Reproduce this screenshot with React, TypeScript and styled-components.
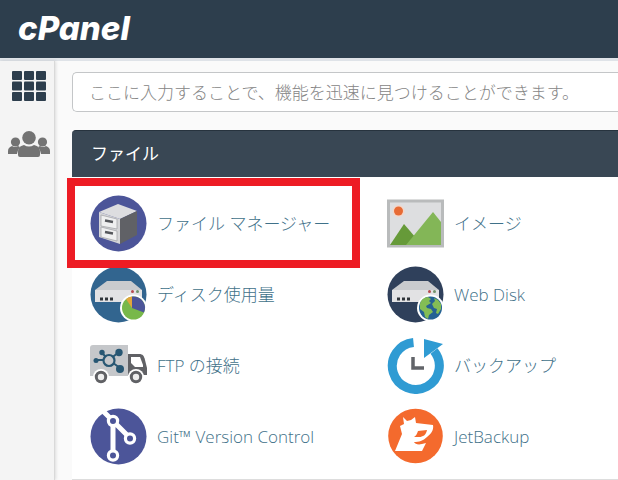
import React from 'react';
import styled, { createGlobalStyle } from 'styled-components';

const GlobalStyle = createGlobalStyle`
  * { box-sizing: border-box; }
  html, body { margin: 0; }
  body {
    background: #fafafa;
    font-family: 'Open Sans', 'Noto Sans CJK JP', sans-serif;
    font-size: 17px;
    font-weight: 300;
    overflow-x: hidden;
  }
`;

const Page = styled.div`
  min-height: 100vh;
  display: flex;
  flex-direction: column;
`;

const Header = styled.header`
  display: flex;
  align-items: center;
  height: 61px;
  padding: 0 18px 2px;
  background: #2d3e4d;
  border-bottom: 3px solid #dfe3e8;
`;

const Logo = styled.a`
  color: #fff;
  font-family: Inter, sans-serif;
  font-size: 33px;
  line-height: 40px;
  font-weight: 800;
  font-style: italic;
  text-decoration: none;
`;

const Layout = styled.div`
  display: flex;
  flex: 1;
`;

const Sidebar = styled.nav`
  display: flex;
  flex-direction: column;
  align-items: center;
  flex: 0 0 55px;
  gap: 30px;
  padding: 10px 0 0 4px;
  background: #f4f4f4;
  border-right: 1px solid #d9d9d9;
  box-shadow: 1px 0 3px rgba(0, 0, 0, 0.12);
`;

const NavButton = styled.button`
  display: block;
  padding: 0;
  border: 0;
  background: none;
  svg { display: block; }
`;

const Main = styled.main`
  flex: 1;
  min-width: 0;
  padding: 11px 0 0 17px;
`;

const Search = styled.input`
  display: block;
  width: 100%;
  height: 40px;
  margin-bottom: 18px;
  padding: 0 16px;
  border: 1px solid #c4c6c8;
  border-right: 0;
  border-radius: 5px 0 0 5px;
  background: #fff;
  font: inherit;
  color: #333;
  outline: none;
  &::placeholder { color: #858585; opacity: 1; }
`;

const Panel = styled.section`
  background: #fff;
  border-bottom: 1px solid #ddd;
`;

const PanelTitle = styled.h2`
  margin: 0;
  height: 47px;
  padding: 0 19px;
  border-top: 1px solid #27333e;
  border-radius: 4px 0 0 0;
  background: #394754;
  color: #fff;
  font-size: 17px;
  font-weight: 400;
  line-height: 45px;
`;

const Grid = styled.div`
  display: grid;
  grid-template-columns: 297px 1fr;
  row-gap: 14px;
  padding: 18px 0 14px 18px;
`;

const Feature = styled.a<{ $highlight?: boolean }>`
  position: relative;
  display: flex;
  align-items: center;
  gap: 10px;
  height: 57px;
  color: #3f7189;
  line-height: 24px;
  white-space: nowrap;
  text-decoration: none;
  svg { flex: none; display: block; }
  ${({ $highlight }) => $highlight && `
    z-index: 1;
    &::after {
      content: '';
      position: absolute;
      inset: -17px 27px -16px -23px;
      border: 8px solid #ed1c24;
    }
  `}
`;

const Icon = ({ children }: { children: React.ReactNode }) => (
  <svg width="57" height="57" viewBox="0 0 57 57" aria-hidden="true">{children}</svg>
);

const Server = ({ color }: { color: string }) => (
  <>
    <circle cx="28.5" cy="28.5" r="28" fill={color} />
    <path d="M5 24 17 15H41L52 24Z" fill="#c9cbce" />
    <path d="M5 24H52V36H5Z" fill="#e2e2e4" />
    <path d="M10 31.5h3v3h-3zM15 31.5h3v3h-3zM20 31.5h3v3h-3z" fill="#30343a" />
    <circle cx="42.5" cy="25.5" r="1.5" fill="#b74b50" />
    <circle cx="47.5" cy="25.5" r="1.5" fill="#72936b" />
    <circle cx="43.5" cy="42" r="13.5" fill="#fff" />
  </>
);

const FileManagerIcon = () => (
  <Icon>
    <circle cx="28.5" cy="28.5" r="28" fill="#4c5599" />
    <path d="M9 17 28 9 47 16 30 24Z" fill="#dddde0" />
    <path d="M9 17 30 24V49L9 42Z" fill="#d5d5d8" />
    <path d="M30 24 47 16V40L30 49Z" fill="#606166" />
    <path d="m11 20 16 4v10l-16-3ZM11 32l16 4v10l-16-4Z" fill="#efeff0" stroke="#a6a7ab" strokeWidth=".8" />
    <path d="m15 25.5 8 1.5m-8 10 8 1.5" stroke="#55575c" strokeWidth="2.3" />
  </Icon>
);

const DiskIcon = () => (
  <Icon>
    <Server color="#32658f" />
    <circle cx="43.5" cy="42" r="11.5" fill="#78b84a" />
    <path d="M42 42V30.6a11.5 11.5 0 0 1 12 16Z" fill="#4c5599" />
    <path d="M42 42 36 33a11.5 11.5 0 0 1 6-2.4Z" fill="#e1a63c" />
  </Icon>
);

const WebDiskIcon = () => (
  <Icon>
    <Server color="#2f405b" />
    <circle cx="43.5" cy="42" r="11.5" fill="#256294" />
    <path d="M33 38c1-4 4-7 8-7l3 2-2 2 2 2-5 3 1 2 4 1 2 3-4 3-1 4-3-2-1-5-4-3ZM47 32l4 2 3 4v5l-3 5-2-1 1-4-3-1-2-4 3-3Z" fill="#83bd55" />
  </Icon>
);

const FtpIcon = () => (
  <Icon>
    <path d="M3 8H38V39H0V11Q0 8 3 8Z" fill="#c5c7ca" />
    <path d="M38 17h11c4 0 5 2 6 6l2 8v7H38Z" fill="#606165" />
    <path d="M41 20h9l3 8v2H45l-4-4Z" fill="#fff" />
    <path d="m19 23-7-7m7 7H6m13 0 10-8m-10 8 11 8" stroke="#285773" strokeWidth="2" />
    <g fill="#285773">
      <circle cx="12" cy="15.5" r="2.7" /><circle cx="6" cy="23.5" r="2.5" />
      <circle cx="29" cy="15.5" r="3.7" /><circle cx="30" cy="32" r="4" />
    </g>
    <circle cx="19" cy="23.5" r="5.5" fill="#c5c7ca" stroke="#285773" strokeWidth="2.2" />
    <circle cx="11" cy="40" r="8" fill="#fff" /><circle cx="46" cy="40" r="8" fill="#fff" />
    <circle cx="11" cy="40" r="4.7" fill="#eee" stroke="#606165" strokeWidth="3" />
    <circle cx="46" cy="40" r="4.7" fill="#eee" stroke="#606165" strokeWidth="3" />
  </Icon>
);

const GitIcon = () => (
  <Icon>
    <circle cx="28.5" cy="28.5" r="28" fill="#4c5599" />
    <path d="m12 2 11 11v35m0-35 17 17" fill="none" stroke="#fff" strokeWidth="5" />
    <g fill="#4c5599" stroke="#fff" strokeWidth="3.2">
      <circle cx="23" cy="13" r="4.6" /><circle cx="40" cy="30.5" r="4.6" /><circle cx="23" cy="47.5" r="4.6" />
    </g>
  </Icon>
);

const ImageIcon = () => (
  <Icon>
    <path d="M1.5 6h54v45h-54z" fill="#dddee0" stroke="#b9bbbc" strokeWidth="3" />
    <circle cx="11.5" cy="16" r="6" fill="#f3d7ca" />
    <circle cx="11.5" cy="16" r="4.5" fill="#e76b35" />
    <path d="M3 50 17 29 29 43V50Z" fill="#669a39" />
    <path d="M19 50 28 39 46 17 54 27V50Z" fill="#83b657" />
  </Icon>
);

const BackupIcon = () => (
  <Icon>
    <path d="M26.5 5.5A23.5 23.5 0 1 0 47 14" fill="none" stroke="#2f9bd3" strokeWidth="9" />
    <path d="m37 2 19 5-19 14Z" fill="#2f9bd3" />
    <path d="M26 20v11h11" fill="none" stroke="#626469" strokeWidth="3.5" />
  </Icon>
);

const JetIcon = () => (
  <Icon>
    <circle cx="28.5" cy="28" r="27.3" fill="#f46a2d" />
    <path d="m13 18 4-2-1-7 4 4 4-1 4-3 1 6 17 2c1 5-2 9-6 12-4 4-8 5-13 5 1 2 4 3 8 2l4-1-4 8H8l7-17Z" fill="#fff" />
    <path d="m31 23 9-1c-1 5-4 7-8 7h-5c2-1 3-3 4-6Z" fill="#f46a2d" />
  </Icon>
);

const AppsIcon = () => (
  <svg width="34" height="30" viewBox="0 0 34 30" fill="#2d3e4d" aria-hidden="true">
    {[0, 10.5, 21].flatMap(y => [0, 12, 24].map(x => (
      <rect key={`${x}-${y}`} x={x} y={y} width="10" height="9" rx="1" />
    )))}
  </svg>
);

const UsersIcon = () => (
  <svg width="42" height="26" viewBox="0 0 42 26" fill="#737373" aria-hidden="true">
    <circle cx="7.5" cy="11" r="4.6" /><circle cx="34.5" cy="11" r="4.6" /><circle cx="21" cy="6.8" r="6.8" />
    <path d="M0 23v-3c0-3 2-4 4-5q3 2 6 0l2 1q-2 2-3 7ZM42 23v-3c0-3-2-4-4-5q-3 2-6 0l-2 1q2 2 3 7Z" />
    <path d="M10 24v-3c0-4 2-6 6-7q5 3 10 0c4 1 6 3 6 7v3q0 2-2 2H12q-2 0-2-2Z" />
  </svg>
);

const features = [
  { label: 'ファイル マネージャー', Glyph: FileManagerIcon, highlight: true },
  { label: 'イメージ', Glyph: ImageIcon },
  { label: 'ディスク使用量', Glyph: DiskIcon },
  { label: 'Web Disk', Glyph: WebDiskIcon },
  { label: 'FTP の接続', Glyph: FtpIcon },
  { label: 'バックアップ', Glyph: BackupIcon },
  { label: 'Git™ Version Control', Glyph: GitIcon },
  { label: 'JetBackup', Glyph: JetIcon },
];

export default function App() {
  return (
    <Page lang="ja">
      <GlobalStyle />
      <Header><Logo href="#">cPanel</Logo></Header>
      <Layout>
        <Sidebar>
          <NavButton type="button" aria-label="ホーム"><AppsIcon /></NavButton>
          <NavButton type="button" aria-label="ユーザー"><UsersIcon /></NavButton>
        </Sidebar>
        <Main>
          <Search type="search" aria-label="機能の検索" placeholder="ここに入力することで、機能を迅速に見つけることができます。" />
          <Panel>
            <PanelTitle>ファイル</PanelTitle>
            <Grid>
              {features.map(({ label, Glyph, highlight }) => (
                <Feature key={label} href="#" $highlight={highlight}><Glyph />{label}</Feature>
              ))}
            </Grid>
          </Panel>
        </Main>
      </Layout>
    </Page>
  );
}
